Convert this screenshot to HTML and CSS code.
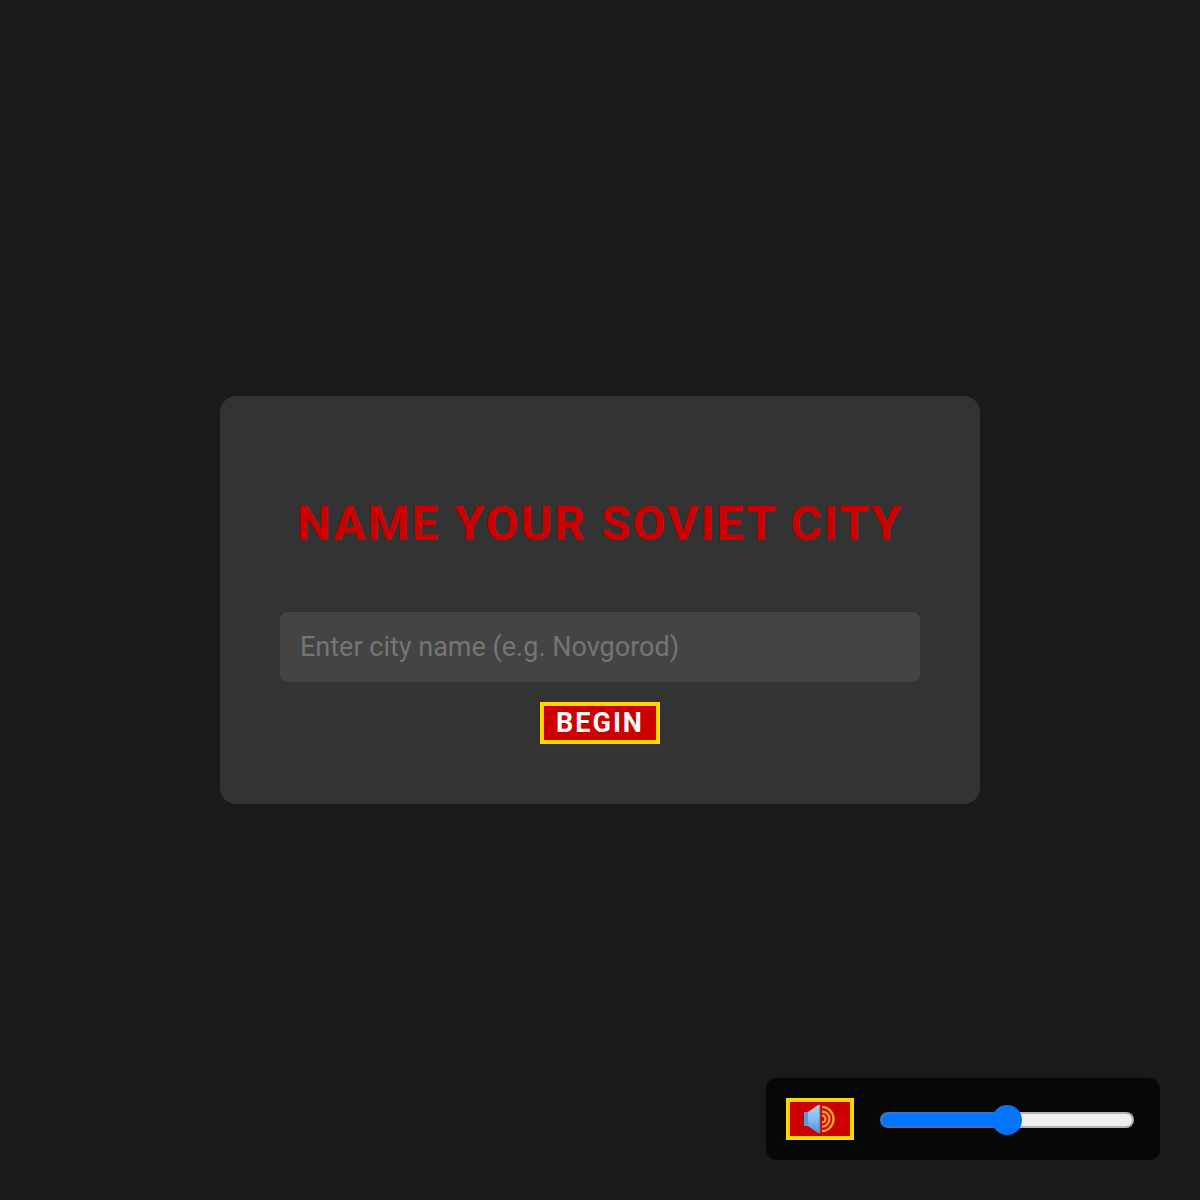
FILE: index.html
```
<!DOCTYPE html>
<html lang="en">
<head>
    <meta charset="UTF-8">
    <meta name="viewport" content="width=device-width, initial-scale=1.0">
    <title>Name Your Soviet City</title>
    <link rel="stylesheet" href="styles.css">
</head>
<body>
    <main class="intro">
        <form class="name-box">
            <h2>Name Your Soviet City</h2>
            <input type="text" class="city-input" placeholder="Enter city name (e.g. Novgorod)" aria-label="City name">
            <button type="button" class="btn">Begin</button>
        </form>
    </main>

    <div class="music-controls">
        <button type="button" class="btn btn-sound" aria-label="Toggle music">
            <svg class="speaker" viewBox="0 0 32 32" aria-hidden="true">
                <defs>
                    <linearGradient id="cone" x1="0" y1="0" x2="0" y2="1">
                        <stop offset="0" stop-color="#a9d0f2"/>
                        <stop offset="0.5" stop-color="#82bdf2"/>
                        <stop offset="1" stop-color="#4e8fd8"/>
                    </linearGradient>
                </defs>
                <path d="M1 9h4v14H1q-1 0-1-1V10q0-1 1-1z" fill="#5b9be0"/>
                <path d="M4 9L14 2q2-1 2 1v26q0 2-2 1L4 23z" fill="url(#cone)"/>
                <path d="M16 2v28" stroke="#a8555c" stroke-width="1"/>
                <g fill="none" stroke="#f59a3c" stroke-width="2.4">
                    <path d="M18 4a11.5 12 0 0 1 0 24"/>
                    <path d="M18 8.5a7.5 7.5 0 0 1 0 15"/>
                    <path d="M18 12.5a3.5 3.5 0 0 1 0 7"/>
                </g>
            </svg>
        </button>
        <input type="range" class="volume" min="0" max="100" value="50" aria-label="Volume">
    </div>
</body>
</html>
```
FILE: styles.css
```
* {
    box-sizing: border-box;
}
body {
    margin: 0;
    background-color: #1a1a1a;
    color: #fff;
    font-family: Roboto, sans-serif;
}
.intro {
    display: flex;
    align-items: center;
    justify-content: center;
    min-height: 100vh;
}
.name-box {
    display: flex;
    flex-direction: column;
    align-items: center;
    gap: 20px;
    width: 100%;
    max-width: 760px;
    padding: 60px;
    background-color: #333;
    border-radius: 16px;
}
h2 {
    margin: 40px 0;
    color: #c00;
    font-size: 48px;
    line-height: 56px;
    letter-spacing: 2px;
    text-align: center;
    text-transform: uppercase;
}
.city-input {
    width: 100%;
    height: 70px;
    padding: 20px;
    border: none;
    border-radius: 8px;
    background-color: #444;
    color: #fff;
    font-family: inherit;
    font-size: 27px;
}
.city-input::placeholder {
    color: #757575;
}
.btn {
    display: flex;
    align-items: center;
    justify-content: center;
    height: 42px;
    padding: 0 12px;
    border: 4px solid gold;
    background-color: #c00;
    color: #fff;
    font-family: inherit;
    font-size: 27px;
    font-weight: bold;
    letter-spacing: 2px;
    text-transform: uppercase;
    cursor: pointer;
}
.music-controls {
    position: fixed;
    right: 40px;
    bottom: 40px;
    display: flex;
    align-items: flex-end;
    gap: 20px;
    padding: 20px;
    background-color: rgba(0, 0, 0, 0.7);
    border-radius: 10px;
}
.btn-sound {
    width: 68px;
}
.speaker {
    width: 32px;
    height: 32px;
}
.volume {
    appearance: none;
    width: 254px;
    height: 32px;
    margin: 4px 6px;
    background: none;
}
.volume::-webkit-slider-runnable-track {
    height: 16px;
    border: 2px solid rgba(118, 118, 118, 0.5);
    border-left-color: #3579c8;
    border-radius: 8px;
    background: linear-gradient(to right, #0075ff 50%, #efefef 50%) border-box;
}
.volume::-webkit-slider-thumb {
    appearance: none;
    width: 30px;
    height: 30px;
    margin-top: -9px;
    border-radius: 50%;
    background-color: #0075ff;
}
```
